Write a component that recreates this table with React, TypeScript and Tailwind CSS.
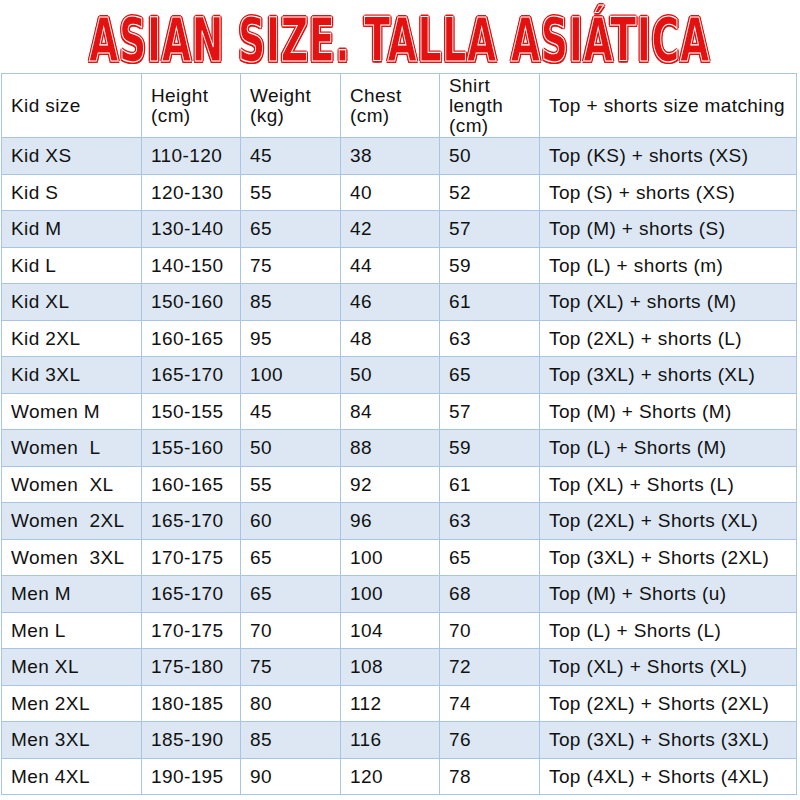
import React from "react";

const rows: string[][] = [
  ["Kid XS", "110-120", "45", "38", "50", "Top (KS) + shorts (XS)"],
  ["Kid S", "120-130", "55", "40", "52", "Top (S) + shorts (XS)"],
  ["Kid M", "130-140", "65", "42", "57", "Top (M) + shorts (S)"],
  ["Kid L", "140-150", "75", "44", "59", "Top (L) + shorts (m)"],
  ["Kid XL", "150-160", "85", "46", "61", "Top (XL) + shorts (M)"],
  ["Kid 2XL", "160-165", "95", "48", "63", "Top (2XL) + shorts (L)"],
  ["Kid 3XL", "165-170", "100", "50", "65", "Top (3XL) + shorts (XL)"],
  ["Women M", "150-155", "45", "84", "57", "Top (M) + Shorts (M)"],
  ["Women  L", "155-160", "50", "88", "59", "Top (L) + Shorts (M)"],
  ["Women  XL", "160-165", "55", "92", "61", "Top (XL) + Shorts (L)"],
  ["Women  2XL", "165-170", "60", "96", "63", "Top (2XL) + Shorts (XL)"],
  ["Women  3XL", "170-175", "65", "100", "65", "Top (3XL) + Shorts (2XL)"],
  ["Men M", "165-170", "65", "100", "68", "Top (M) + Shorts (u)"],
  ["Men L", "170-175", "70", "104", "70", "Top (L) + Shorts (L)"],
  ["Men XL", "175-180", "75", "108", "72", "Top (XL) + Shorts (XL)"],
  ["Men 2XL", "180-185", "80", "112", "74", "Top (2XL) + Shorts (2XL)"],
  ["Men 3XL", "185-190", "85", "116", "76", "Top (3XL) + Shorts (3XL)"],
  ["Men 4XL", "190-195", "90", "120", "78", "Top (4XL) + Shorts (4XL)"],
];

const header: string[][] = [
  ["Kid size"],
  ["Height", "(cm)"],
  ["Weight", "(kg)"],
  ["Chest", "(cm)"],
  ["Shirt", "length", "(cm)"],
  ["Top + shorts size matching"],
];

const TITLE = "ASIAN SIZE. TALLA ASIÁTICA";

export default function App() {
  return (
    <div
      className="w-[800px] h-[800px] bg-white overflow-hidden"
      style={{ fontFamily: '"Liberation Sans", Arial, sans-serif' }}
    >
      <div className="h-[73px] flex items-start justify-center">
        <span
          className="mt-[20px] origin-center scale-x-[1.054] scale-y-[1.5] whitespace-nowrap text-[40px] leading-[40px] font-bold tracking-[0.6px] text-[#e3110f] [-webkit-text-stroke:0.8px_#ffffff] [text-shadow:1.6px_0_0_#e3110f,-1.6px_0_0_#e3110f,0_1.2px_0_#e3110f,0_-1.2px_0_#e3110f,1.2px_1px_0_#e3110f,-1.2px_1px_0_#e3110f,1.2px_-1px_0_#e3110f,-1.2px_-1px_0_#e3110f]"
          style={{ fontFamily: '"Liberation Sans Narrow", "DejaVu Sans Condensed", "Liberation Sans", sans-serif' }}
        >
          {TITLE}
        </span>
      </div>
      <div className="ml-[1px] w-[796px] border-l border-t border-[#a8c4e6] grid grid-cols-[140px_99px_100px_99px_100px_257px] text-[19px] tracking-[0.4px] text-[#111] leading-[20px]">
        {header.map((lines, i) => (
          <div
            key={"h" + i}
            className="h-[64px] border-r border-b border-[#a8c4e6] bg-white flex flex-col justify-center pl-[9px]"
          >
            {lines.map((l) => (
              <span key={l} className="leading-[20px]">
                {l}
              </span>
            ))}
          </div>
        ))}
        {rows.map((r, ri) =>
          r.map((c, ci) => (
            <div
              key={ri + "-" + ci}
              className={
                (ri % 2 === 0 ? "bg-[#dce7f3] h-[37px]" : "bg-white h-[36px]") +
                " border-r border-b border-[#a8c4e6] flex items-center pl-[9px] whitespace-pre"
              }
            >
              {c}
            </div>
          ))
        )}
      </div>
    </div>
  );
}
